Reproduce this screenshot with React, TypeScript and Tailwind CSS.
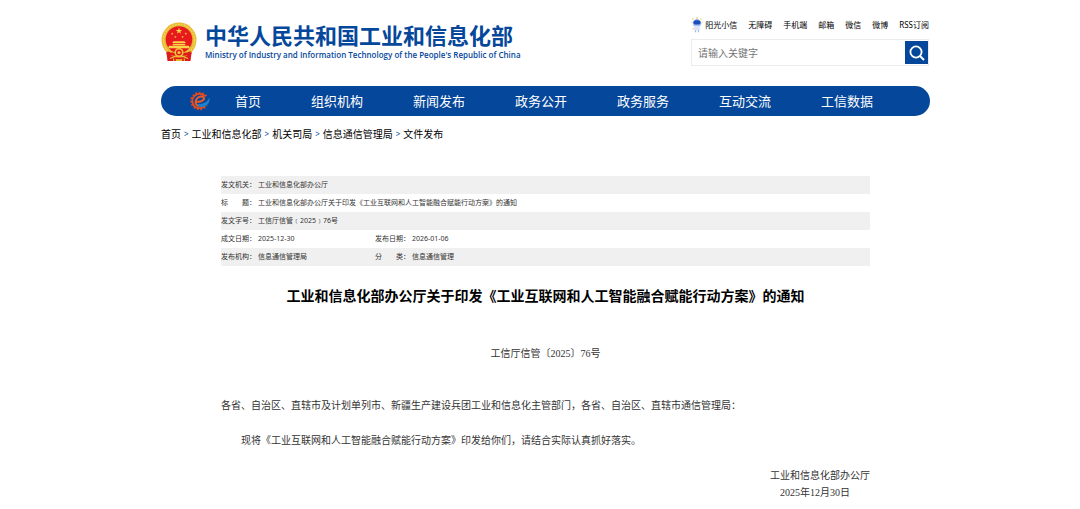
import type { FormEvent } from "react"

type NavLink = { href: string; label: string }

const topLinks: NavLink[] = [
    { href: "#accessible", label: "无障碍" },
    { href: "#mobile", label: "手机端" },
    { href: "#mail", label: "邮箱" },
    { href: "#wechat", label: "微信" },
    { href: "#weibo", label: "微博" },
    { href: "#rss", label: "RSS订阅" },
]

const navLinks: NavLink[] = [
    { href: "#home", label: "首页" },
    { href: "#organization", label: "组织机构" },
    { href: "#news", label: "新闻发布" },
    { href: "#open", label: "政务公开" },
    { href: "#service", label: "政务服务" },
    { href: "#interaction", label: "互动交流" },
    { href: "#data", label: "工信数据" },
]

const crumbs: NavLink[] = [
    { href: "#home", label: "首页" },
    { href: "#miit", label: "工业和信息化部" },
    { href: "#departments", label: "机关司局" },
    { href: "#xgj", label: "信息通信管理局" },
    { href: "#files", label: "文件发布" },
]

const infoRows: { label: string; value: string }[][] = [
    [{ label: "发文机关：", value: "工业和信息化部办公厅" }],
    [{ label: "标　　题：", value: "工业和信息化部办公厅关于印发《工业互联网和人工智能融合赋能行动方案》的通知" }],
    [{ label: "发文字号：", value: "工信厅信管﹝2025﹞76号" }],
    [{ label: "成文日期：", value: "2025-12-30" }, { label: "发布日期：", value: "2026-01-06" }],
    [{ label: "发布机构：", value: "信息通信管理局" }, { label: "分　　类：", value: "信息通信管理" }],
]

const star = "M0 -1L.24 -.32L.95 -.31L.38 .12L.59 .81L0 .4L-.59 .81L-.38 .12L-.95 -.31L-.24 -.32Z"

function Emblem() {
    return (
        <svg viewBox="0 0 36 40" className="h-10 w-9 shrink-0" aria-hidden="true">
            <path d="M5 27h26l-1.500 12h-23z" fill="#dc1a1c" />
            <circle cx="18" cy="18" r="17.500" fill="#e8bb35" />
            <circle cx="18" cy="18" r="15.600" fill="none" stroke="#f5d75c" strokeWidth="1.200" strokeDasharray="2 1" />
            <circle cx="18" cy="17.500" r="13.300" fill="#e8191d" />
            <g fill="#f9d649">
                <path d={star} transform="translate(18 9) scale(3.400)" />
                <path d={star} transform="translate(11.200 11.600) scale(1.400)" />
                <path d={star} transform="translate(24.800 11.600) scale(1.400)" />
                <path d={star} transform="translate(14.400 15) scale(1.300)" />
                <path d={star} transform="translate(21.600 15) scale(1.300)" />
                <path d="M12.500 19.200h11l1.400 1.800h-13.800zM11.800 21.800h12.400v1.400h-12.400zM8 23.800h20l.8 2.400h-21.600z" />
            </g>
            <path d="M6 30.500q5 2.500 9 1.500M30 30.500q-5 2.500-9 1.500" stroke="#dc1a1c" strokeWidth="3" fill="none" />
            <circle cx="18" cy="30.500" r="3.800" fill="#e8191d" stroke="#f2c53a" strokeWidth="1.600" />
            <circle cx="18" cy="30.500" r="1.600" fill="#f2c53a" />
            <path d="M9 36.500l5-2M27 36.500l-5-2" stroke="#f2c53a" strokeWidth="1.200" />
            <path d="M12 36.500q6 1.500 12 0v2.500h-12z" fill="#e9b92f" />
            <path d="M14 37v2M22 37v2" stroke="#dc1a1c" strokeWidth="1.600" />
        </svg>
    )
}

function GearLogo() {
    return (
        <svg viewBox="0 0 20 20" className="h-5 w-5" aria-hidden="true">
            <circle cx="9.500" cy="10" r="8" fill="none" stroke="#e0451c" strokeWidth="2.600" strokeDasharray="1.700 1.650" />
            <circle cx="9.500" cy="10" r="7.200" fill="#05479a" stroke="#e84b1c" strokeWidth="1.800" />
            <path d="M14 5.500h6v9h-7z" fill="#05479a" />
            <path
                d="M6.500 10.800C10.500 11.200 14.500 9 14 7C13.300 4.800 8.500 5 6.500 8C4.600 11.200 5.500 14.500 9 15.300"
                fill="none"
                stroke="#f05a24"
                strokeWidth="2"
            />
            <path d="M7.500 13C13 13.500 18 11 19.200 6.500C21 12 15 17.500 9.500 15.800C8.500 15.300 7.800 14.500 7.500 13Z" fill="#1b83cd" />
        </svg>
    )
}

function Mascot() {
    return (
        <svg viewBox="0 0 12 16" className="h-4 w-3" aria-hidden="true">
            <path d="M6 0v2M1.500 1.500l1 1.200M10.500 1.500l-1 1.200M.3 5h1M11.700 5h-1" stroke="#f4cf58" strokeWidth="1.200" />
            <path d="M1.800 7C1.500 1 10.500 1 10.200 7z" fill="#3569d8" />
            <rect x="2" y="5" width="8" height="4.500" rx="2" fill="#a9c1f3" />
            <rect x="2.800" y="4" width="6.400" height="3.600" rx="1.400" fill="#1f4bb8" />
            <path d="M3.500 9.500h5l.8 3-1.800 1h-3l-1.800-1z" fill="#dbe5fa" />
            <path d="M4.500 13.200v2M7.500 13.200v2" stroke="#9cb5e6" strokeWidth="1.200" />
            <path d="M2.800 11l-1.500 1.500" stroke="#f4cf58" strokeWidth="1" />
        </svg>
    )
}

function SearchForm() {
    const handleSubmit = (event: FormEvent) => event.preventDefault()

    return (
        <form onSubmit={handleSubmit} className="flex h-[27px] w-[238px] items-center border border-[#ececec]">
            <input
                type="search"
                aria-label="搜索"
                placeholder="请输入关键字"
                className="h-full min-w-0 flex-1 px-1.5 text-[10px] text-[#333] outline-none placeholder:text-[#757575]"
            />
            <button type="submit" aria-label="搜索" className="flex h-[23px] w-[23px] items-center justify-center bg-[#05479a] text-white">
                <svg viewBox="0 0 16 16" className="h-4 w-4" fill="none" stroke="currentColor" aria-hidden="true">
                    <circle cx="7" cy="7" r="5.600" strokeWidth="1.800" />
                    <path d="M11 11l4 4" strokeWidth="2" />
                </svg>
            </button>
        </form>
    )
}

function Header() {
    return (
        <header>
            <div className="flex items-start justify-between">
                <a href="#home" className="flex items-center gap-2 pt-[22px] text-[#05479a]">
                    <Emblem />
                    <span className="flex flex-col">
                        <span className="font-['Liberation_Sans','Noto_Sans_CJK_SC',sans-serif] text-[22px] leading-[26px] font-bold">
                            中华人民共和国工业和信息化部
                        </span>
                        <span className="font-['Open_Sans','Noto_Sans',sans-serif] text-[8px] leading-[10px] font-semibold">
                            Ministry of Industry and Information Technology of the People's Republic of China
                        </span>
                    </span>
                </a>
                <div className="flex flex-col items-end gap-1.5 pt-[17px] pr-px">
                    <nav aria-label="快捷链接" className="flex items-center gap-[11px] text-[8px] leading-4 text-black">
                        <a href="#sunshine" className="flex items-center gap-0.5">
                            <Mascot />
                            阳光小信
                        </a>
                        {topLinks.map(link => (
                            <a key={link.href} href={link.href}>{link.label}</a>
                        ))}
                    </nav>
                    <SearchForm />
                </div>
            </div>

            <nav aria-label="主导航" className="mt-5 flex h-[30px] items-center rounded-full bg-[#05479a] pl-[29px]">
                <GearLogo />
                <ul className="flex text-[13px] leading-[30px] text-white">
                    {navLinks.map(link => (
                        <li key={link.href}>
                            <a href={link.href} className="block px-[25px]">{link.label}</a>
                        </li>
                    ))}
                </ul>
            </nav>
        </header>
    )
}

function Breadcrumb() {
    return (
        <nav aria-label="当前位置" className="pt-2.5">
            <ol className="flex gap-[3px] text-[10px] leading-4 text-black">
                {crumbs.map((crumb, index) => (
                    <li key={crumb.href} className="flex gap-[3px]">
                        {index > 0 && <span className="text-[8px] text-[#05479a]">&gt;</span>}
                        <a href={crumb.href}>{crumb.label}</a>
                    </li>
                ))}
            </ol>
        </nav>
    )
}

function InfoTable() {
    return (
        <table className="w-full table-fixed text-left text-[7px] leading-[18px] text-[#333]">
            <colgroup>
                <col className="w-[37px]" />
                <col className="w-[117px]" />
                <col className="w-[37px]" />
                <col />
            </colgroup>
            <tbody>
                {infoRows.map(row => (
                    <tr key={row[0].label} className="odd:bg-[#f0f0f0]">
                        {row.map(cell => [
                            <th key={cell.label} scope="row" className="p-0 font-normal whitespace-nowrap">{cell.label}</th>,
                            <td key={cell.value} colSpan={row.length === 1 ? 3 : 1} className="p-0">{cell.value}</td>,
                        ])}
                    </tr>
                ))}
            </tbody>
        </table>
    )
}

export default function App() {
    return (
        <div className="bg-white pl-[11px] font-['Noto_Sans','Noto_Sans_CJK_SC',sans-serif]" lang="zh-CN">
            <div className="mx-auto max-w-[769px]">
                <Header />
                <Breadcrumb />
                <main className="px-[60px] pt-[34px]">
                    <InfoTable />
                    <article className="font-['Liberation_Serif','Noto_Sans_CJK_SC',serif] text-[10px] leading-[17px] text-[#333]">
                        <h1 className="pt-[21px] text-center text-[14px] leading-5 font-bold text-black">
                            工业和信息化部办公厅关于印发《工业互联网和人工智能融合赋能行动方案》的通知
                        </h1>
                        <p className="pt-[38px] text-center">工信厅信管〔2025〕76号</p>
                        <p className="pt-[35px]">
                            各省、自治区、直辖市及计划单列市、新疆生产建设兵团工业和信息化主管部门，各省、自治区、直辖市通信管理局：
                        </p>
                        <p className="pt-[18px] indent-5">
                            现将《工业互联网和人工智能融合赋能行动方案》印发给你们，请结合实际认真抓好落实。
                        </p>
                        <p className="pt-[18px] text-right">工业和信息化部办公厅</p>
                        <p className="pr-5 text-right">2025年12月30日</p>
                    </article>
                </main>
            </div>
        </div>
    )
}
